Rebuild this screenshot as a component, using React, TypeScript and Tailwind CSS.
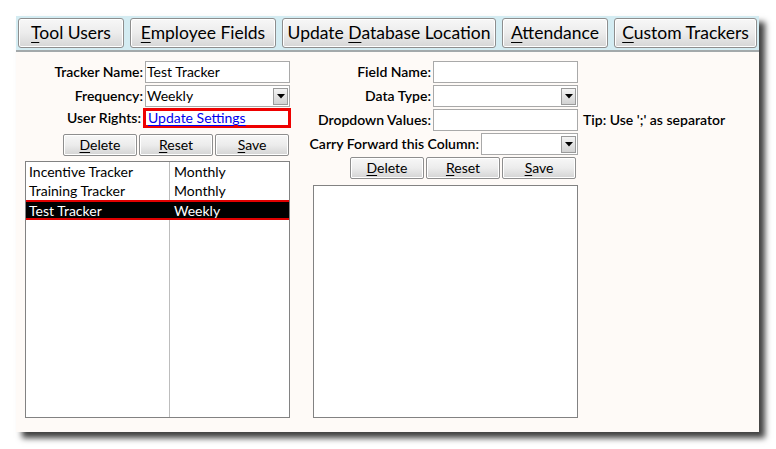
import React from "react";

function Tab({ w, pre, u, post }: { w: string; pre?: string; u: string; post: string }) {
  return (
    <button
      className={`${w} h-[30px] shrink-0 rounded-[3px] border border-[#8e8e8e] bg-gradient-to-b from-[#f7f7f7] via-[#ececec] to-[#d6d6d6] text-[17.5px] leading-none text-black whitespace-nowrap shadow-[inset_0_0_0_1px_#ffffff]`}
    >
      {pre}
      <span className="underline underline-offset-[3px]">{u}</span>
      {post}
    </button>
  );
}

function SmallBtn({ u, post }: { u: string; post: string }) {
  return (
    <button className="w-[74px] h-[22px] shrink-0 rounded-[2px] border border-[#8e8e8e] bg-gradient-to-b from-[#f7f7f7] via-[#ececec] to-[#d4d4d4] text-[14px] leading-none text-black shadow-[inset_0_0_0_1px_#ffffff]">
      <span className="underline underline-offset-2">{u}</span>
      {post}
    </button>
  );
}

function Arrow() {
  return (
    <div className="absolute right-[1px] top-[2px] w-[15px] h-[17px] border border-[#9a9a9a] bg-gradient-to-b from-[#f4f4f4] to-[#d2d2d2] flex items-center justify-center">
      <svg width="8" height="5" viewBox="0 0 8 5">
        <path d="M0 0 L8 0 L4 4.5 Z" fill="#000" />
      </svg>
    </div>
  );
}

function Field({ w, value, dropdown }: { w: string; value?: string; dropdown?: boolean }) {
  return (
    <div className={`${w} h-[22px] relative shrink-0 border border-[#a9a9a9] bg-white text-[14px] leading-[20px] pl-[1px] text-black`}>
      {value}
      {dropdown && <Arrow />}
    </div>
  );
}

function Row({ label, children, mt }: { label: string; children: React.ReactNode; mt: string }) {
  return (
    <div className={`flex items-center justify-end ${mt}`}>
      <span className="text-[14px] font-semibold text-black mr-[2px] leading-none whitespace-nowrap">{label}</span>
      {children}
    </div>
  );
}

export default function App() {
  const rows = [
    { n: "Incentive Tracker", f: "Monthly" },
    { n: "Training Tracker", f: "Monthly" },
  ];
  return (
    <div className="w-[776px] h-[449px] bg-white overflow-hidden font-['Lato','Liberation_Sans',sans-serif]">
      <div className="ml-[16px] mt-[16px] w-[743px] h-[416px] bg-[#fefaf7] shadow-[6px_6px_6px_rgba(0,0,0,0.75)] flex flex-col">
        <div className="h-[36px] bg-[#d4ecf2] border-b-2 border-[#a3a9ab] flex items-start pt-[2px] pl-[2px] gap-[6px]">
          <Tab w="w-[106px]" u="T" post="ool Users" />
          <Tab w="w-[146px]" u="E" post="mployee Fields" />
          <Tab w="w-[214px]" pre="Update " u="D" post="atabase Location" />
          <Tab w="w-[106px]" u="A" post="ttendance" />
          <Tab w="w-[143px]" u="C" post="ustom Trackers" />
        </div>
        <div className="flex pl-[9px] pt-[9px]">
          {/* Left panel */}
          <div className="w-[265px] flex flex-col">
            <Row label="Tracker Name:" mt="mt-0">
              <Field w="w-[145px]" value="Test Tracker" />
            </Row>
            <Row label="Frequency:" mt="mt-[2px]">
              <Field w="w-[145px]" value="Weekly" dropdown />
            </Row>
            <Row label="User Rights:" mt="mt-[1px]">
              <div className="w-[148px] h-[20px] shrink-0 border-[3px] border-[#ee0000] bg-white text-[14px] leading-[14px] pl-[2px] text-[#0000ee] underline underline-offset-2 -mr-[1px]">
                Update Settings
              </div>
            </Row>
            <div className="flex justify-end gap-[2px] pr-[1px] mt-[6px]">
              <SmallBtn u="D" post="elete" />
              <SmallBtn u="R" post="eset" />
              <SmallBtn u="S" post="ave" />
            </div>
            <div className="mt-[5px] h-[257px] border border-[#828282] bg-white relative">
              <div className="absolute left-[143px] top-0 bottom-0 w-px bg-[#bdbdbd]" />
              {rows.map((r) => (
                <div key={r.n} className="flex h-[19px] items-center text-[14px] text-black">
                  <span className="w-[144px] pl-[3px]">{r.n}</span>
                  <span className="pl-[4px]">{r.f}</span>
                </div>
              ))}
              <div className="relative flex h-[20px] items-center text-[14px] text-white bg-black border-y-2 border-[#e00000]">
                <span className="w-[144px] pl-[3px]">Test Tracker</span>
                <span className="pl-[4px]">Weekly</span>
              </div>
            </div>
          </div>
          {/* Right panel */}
          <div className="ml-[23px] flex flex-col">
            <div className="flex">
              <div className="w-[265px]">
                <Row label="Field Name:" mt="mt-0">
                  <Field w="w-[145px]" />
                </Row>
                <Row label="Data Type:" mt="mt-[2px]">
                  <Field w="w-[145px]" dropdown />
                </Row>
                <Row label="Dropdown Values:" mt="mt-[2px]">
                  <Field w="w-[145px]" />
                </Row>
                <Row label="Carry Forward this Column:" mt="mt-[2px]">
                  <Field w="w-[97px]" dropdown />
                </Row>
              </div>
              <div className="mt-[48px] ml-[5px] h-[22px] flex items-center text-[14px] font-semibold text-black whitespace-nowrap leading-none">
                Tip: Use ';' as separator
              </div>
            </div>
            <div className="w-[265px] flex justify-end gap-[2px] pr-[2px] mt-[2px]">
              <SmallBtn u="D" post="elete" />
              <SmallBtn u="R" post="eset" />
              <SmallBtn u="S" post="ave" />
            </div>
            <div className="w-[265px] mt-[6px] h-[233px] border border-[#828282] bg-white" />
          </div>
        </div>
      </div>
    </div>
  );
}
